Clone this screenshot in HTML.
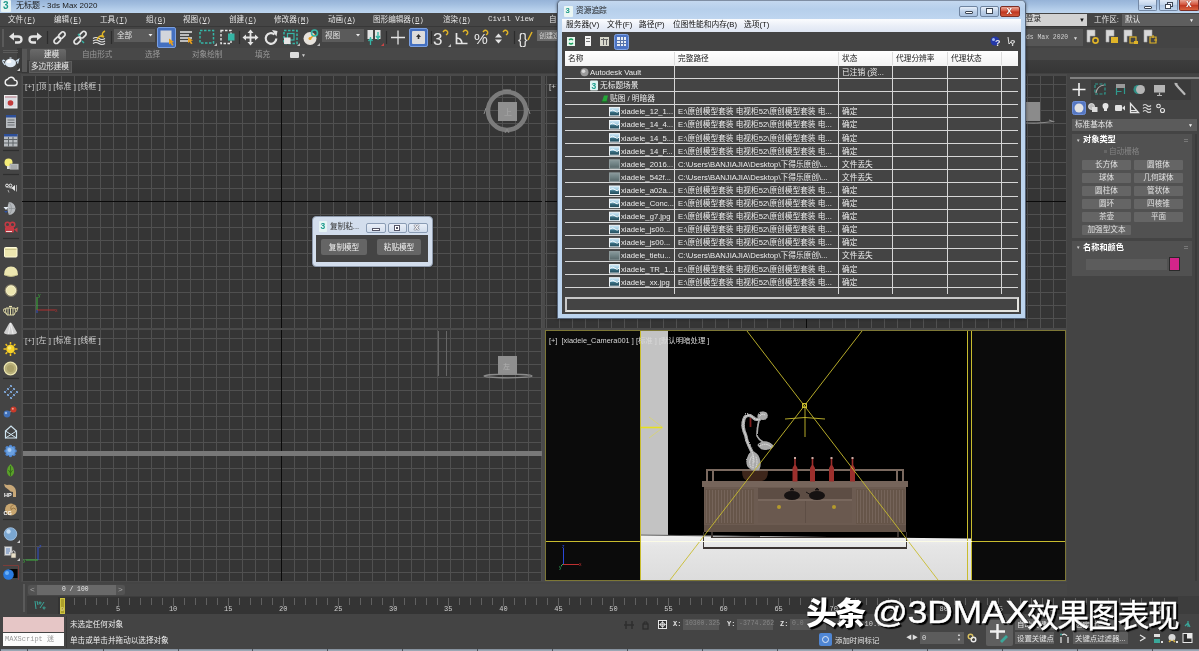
<!DOCTYPE html>
<html lang="zh-CN">
<head>
<meta charset="utf-8">
<title>无标题 - 3ds Max 2020</title>
<style>
*{box-sizing:border-box;margin:0;padding:0}
html,body{width:1199px;height:651px;overflow:hidden;background:#444}
body{position:relative;font-family:"Liberation Sans","Noto Sans CJK SC",sans-serif;font-size:9px;color:#ddd;line-height:1}
.a{position:absolute}
.t{position:absolute;white-space:nowrap}
.mono{font-family:"Liberation Mono","Noto Sans CJK SC",monospace}
svg{position:absolute;overflow:visible}
</style>
</head>
<body>
<div id="root" style="position:absolute;left:0;top:0;width:1199px;height:651px;will-change:transform;overflow:hidden">
<!-- main window title bar -->
<div class="a" style="left:0;top:0;width:1199px;height:13px;background:linear-gradient(#96b3d8,#a3bfe0 35%,#b6cfeb 75%,#bdd5ef)"></div>
<div class="a" style="left:1px;top:0;width:10px;height:12px;background:#e8f4f4;border-radius:1px"></div>
<div class="t" style="left:3px;top:1px;font-size:10px;font-weight:bold;color:#1f9a8c">3</div>
<div class="t" style="left:16px;top:2px;font-size:8px;color:#1a1a1a">无标题 - 3ds Max 2020</div>
<!-- window buttons -->
<div class="a" style="left:1138px;top:0;width:19px;height:10.500px;border:1px solid #7488a4;border-top:0;border-radius:0 0 2px 2px;background:linear-gradient(#dfe9f6,#c4d6ec 45%,#aec5e2 50%,#c0d5ee)"></div>
<div class="a" style="left:1144px;top:5.500px;width:8px;height:3px;border:1px solid #3c4654;background:#fff;border-radius:1px"></div>
<div class="a" style="left:1159px;top:0;width:18.500px;height:10.500px;border:1px solid #7488a4;border-top:0;border-radius:0 0 2px 2px;background:linear-gradient(#dfe9f6,#c4d6ec 45%,#aec5e2 50%,#c0d5ee)"></div>
<div class="a" style="left:1166.500px;top:2px;width:6px;height:5px;border:1px solid #3c4654;background:#eef"></div>
<div class="a" style="left:1164.500px;top:4px;width:6px;height:5px;border:1px solid #3c4654;background:#fff"></div>
<div class="a" style="left:1179px;top:0;width:20px;height:10.500px;border:1px solid #7c2f26;border-top:0;border-radius:0 0 2px 2px;background:linear-gradient(#e8a494,#d4573f 45%,#c03722 52%,#d8623e)"></div>
<div class="t" style="left:1186px;top:-1px;font-size:10px;font-weight:bold;color:#fff;text-shadow:0 0 1px #511">x</div>

<!-- menu bar -->
<div class="a" style="left:0;top:13px;width:1199px;height:14px;background:#454545"></div>
<div class="t" style="left:8px;top:15.700px;font-size:7.6px;color:#e4e4e4">文件<span class="mono" style="font-size:7px">(<u>F</u>)</span></div>
<div class="t" style="left:54px;top:15.700px;font-size:7.6px;color:#e4e4e4">编辑<span class="mono" style="font-size:7px">(<u>E</u>)</span></div>
<div class="t" style="left:100px;top:15.700px;font-size:7.6px;color:#e4e4e4">工具<span class="mono" style="font-size:7px">(<u>T</u>)</span></div>
<div class="t" style="left:146px;top:15.700px;font-size:7.6px;color:#e4e4e4">组<span class="mono" style="font-size:7px">(<u>G</u>)</span></div>
<div class="t" style="left:183px;top:15.700px;font-size:7.6px;color:#e4e4e4">视图<span class="mono" style="font-size:7px">(<u>V</u>)</span></div>
<div class="t" style="left:229px;top:15.700px;font-size:7.6px;color:#e4e4e4">创建<span class="mono" style="font-size:7px">(<u>C</u>)</span></div>
<div class="t" style="left:274px;top:15.700px;font-size:7.6px;color:#e4e4e4">修改器<span class="mono" style="font-size:7px">(<u>M</u>)</span></div>
<div class="t" style="left:328px;top:15.700px;font-size:7.6px;color:#e4e4e4">动画<span class="mono" style="font-size:7px">(<u>A</u>)</span></div>
<div class="t" style="left:373px;top:15.700px;font-size:7.6px;color:#e4e4e4">图形编辑器<span class="mono" style="font-size:7px">(<u>D</u>)</span></div>
<div class="t" style="left:443px;top:15.700px;font-size:7.6px;color:#e4e4e4">渲染<span class="mono" style="font-size:7px">(<u>R</u>)</span></div>
<div class="t mono" style="left:488px;top:15.700px;font-size:7.6px;color:#e4e4e4">Civil View</div>
<div class="t" style="left:549px;top:15.700px;font-size:7.6px;color:#e4e4e4">自</div>
<!-- sign-in / workspace -->
<div class="a" style="left:1025px;top:14px;width:62px;height:12px;background:#d2d2d2"></div>
<div class="t" style="left:1026px;top:15px;font-size:7.6px;color:#222">登录</div>
<div class="t" style="left:1079px;top:17px;font-size:6px;color:#111">▼</div>
<div class="t" style="left:1094px;top:15.700px;font-size:7.6px;color:#e4e4e4">工作区: </div>
<div class="a" style="left:1121.500px;top:14px;width:78px;height:12px;background:#5e5e5e"></div>
<div class="t" style="left:1125px;top:15.700px;font-size:7.6px;color:#e4e4e4">默认</div>
<div class="t" style="left:1189px;top:17.500px;font-size:5px;color:#eee">▼</div>

<div class="a" style="left:0;top:26px;width:1199px;height:1px;background:#383838"></div>
<!-- main toolbar -->
<div class="a" style="left:0;top:27px;width:1199px;height:21px;background:#444"></div>
<div class="a" style="left:2px;top:29px;width:2px;height:18px;background:#5a5a5a"></div>
<div class="a" style="left:1025px;top:29px;width:58px;height:17px;background:#565656"></div>
<div class="t mono" style="left:1026px;top:35px;font-size:6.400px;color:#d0d0d0">ds Max 2020</div>
<div class="t" style="left:1073px;top:36px;font-size:5px;color:#ddd">▼</div>
<!-- ribbon -->
<div class="a" style="left:0;top:48px;width:1199px;height:12px;background:#484848"></div><div class="a" style="left:0;top:60px;width:1199px;height:13px;background:linear-gradient(#3d3d3d,#363636)"></div><div class="a" style="left:0;top:73px;width:1199px;height:3px;background:#414141"></div>
<div class="a" style="left:17px;top:48px;width:5px;height:25px;background:#3a3a3a"></div><div class="a" style="left:22px;top:49px;width:5px;height:23px;background:#575757"></div>
<div class="a" style="left:30px;top:49px;width:36px;height:12px;background:linear-gradient(#6a6a6a,#555);border-radius:2px 2px 0 0"></div>
<div class="t" style="left:44px;top:51px;font-size:7.6px;color:#eee">建模</div>
<div class="t" style="left:82px;top:51px;font-size:7.6px;color:#9a9a9a">自由形式</div>
<div class="t" style="left:145px;top:51px;font-size:7.6px;color:#9a9a9a">选择</div>
<div class="t" style="left:192px;top:51px;font-size:7.6px;color:#9a9a9a">对象绘制</div>
<div class="t" style="left:255px;top:51px;font-size:7.6px;color:#9a9a9a">填充</div>
<div class="a" style="left:290px;top:52px;width:9px;height:6px;background:#ddd;border-radius:1px"></div>
<div class="t" style="left:301px;top:53px;font-size:5px;color:#ccc">▼</div>

<div class="a" style="left:29px;top:61px;width:43px;height:12px;background:#4e4e4e;border:1px solid #5c5c5c"></div>
<div class="t" style="left:31px;top:63px;font-size:7.6px;color:#eee">多边形建模</div>
<!-- left toolbar -->
<div class="a" style="left:0;top:48px;width:17px;height:28px;background:#444"></div><div class="a" style="left:0;top:73px;width:22px;height:541px;background:#444"></div>
<svg style="left:0;top:27px" width="1199" height="21" viewBox="0 27 1199 21"><path d="M12.500 36.500h5.500q3.500 0 3.500 3t-3.500 3h-3" stroke="#e4e4e4" stroke-width="2.300" fill="none"/><path d="M9 36.500l5-4v8z" fill="#e4e4e4"/><path d="M38.500 36.500h-5.500q-3.500 0-3.500 3t3.500 3h3" stroke="#e4e4e4" stroke-width="2.300" fill="none"/><path d="M42 36.500l-5-4v8z" fill="#e4e4e4"/><path d="M47.500 31v13" stroke="#2c2c2c" stroke-width="1.200"/><path d="M111.500 31v13" stroke="#2c2c2c" stroke-width="1.200"/><path d="M239.500 31v13" stroke="#2c2c2c" stroke-width="1.200"/><path d="M386.500 31v13" stroke="#2c2c2c" stroke-width="1.200"/><path d="M431.500 31v13" stroke="#2c2c2c" stroke-width="1.200"/><path d="M514.500 31v13" stroke="#2c2c2c" stroke-width="1.200"/><g fill="none" stroke="#e4e4e4" stroke-width="1.700"><rect x="-3.300" y="-2.300" width="7.500" height="4.600" rx="2.300" transform="translate(57 40.500) rotate(-45)"/><rect x="-3.300" y="-2.300" width="7.500" height="4.600" rx="2.300" transform="translate(61.500 35.500) rotate(-45)"/></g><g fill="none" stroke="#e4e4e4" stroke-width="1.700"><rect x="-3.300" y="-2.300" width="7.500" height="4.600" rx="2.300" transform="translate(77 41) rotate(-45)"/><rect x="-3.300" y="-2.300" width="7.500" height="4.600" rx="2.300" transform="translate(82.500 35) rotate(-45)"/></g><path d="M78 34l2 2M82 41l2 2" stroke="#35b5a6" stroke-width="1.400"/><path d="M93 38.500q3-2 6 0t6 0M93 41q3-2 6 0t6 0M93 43.500q3-2 6 0t6 0" stroke="#e4e4e4" stroke-width="1.200" fill="none"/><path d="M97 40q2-5 6-4-2-3 2-5M100 36l4 1" stroke="#e0b428" stroke-width="1.400" fill="none"/><rect x="114" y="29" width="41" height="13" fill="#5b5b5b"/><path d="M148.500 34h4l-2 2.500z" fill="#eee"/><rect x="157.500" y="27.500" width="18" height="20" rx="1.500" fill="#4470c0" stroke="#7a9fe0" stroke-width="1"/><rect x="160.500" y="30.500" width="11" height="12" fill="#d2d6dc"/><path d="M169 38.500l5 3.500-2 .5 1.500 2.500-1.500.8-1.500-2.600-1.500 1.300z" fill="#e8a020"/><path d="M180 32h12M180 35h9M180 38h12M180 41h8" stroke="#e4e4e4" stroke-width="1.500"/><path d="M188 37l5 3.500-2 .5 1.500 2.500-1.500.8-1.500-2.600-1.500 1.300z" fill="#e8a020"/><rect x="200" y="30.500" width="13.500" height="12.500" fill="none" stroke="#35b5a6" stroke-width="1.500" stroke-dasharray="2.500 1.500"/><path d="M217 43v3h-3z" fill="#bbb"/><rect x="221" y="30.500" width="10" height="13" fill="none" stroke="#e4e4e4" stroke-width="1.400" stroke-dasharray="2.500 1.500"/><rect x="228" y="33.500" width="6.500" height="7" fill="#35b5a6"/><path d="M250.500 31v13M244 37.500h13" stroke="#e4e4e4" stroke-width="1.800"/><path d="M250.500 29.500l3 3.500h-6zM250.500 45.500l3-3.500h-6zM242.500 37.500l3.500-3v6zM258.500 37.500l-3.500-3v6z" fill="#e4e4e4"/><path d="M274.500 34.500a5.300 5.300 0 1 0 1.800 4" stroke="#e4e4e4" stroke-width="2.200" fill="none"/><path d="M272 30l5.500 1-1 5.500z" fill="#e4e4e4"/><rect x="284" y="30.500" width="13" height="13" fill="none" stroke="#35b5a6" stroke-width="1.500" stroke-dasharray="2.500 1.500"/><rect x="287.500" y="33.500" width="6.500" height="6.500" fill="none" stroke="#35b5a6" stroke-width="1.200"/><rect x="284" y="37.500" width="6.500" height="6.500" fill="#e4e4e4"/><path d="M300 43v3h-3z" fill="#bbb"/><circle cx="310" cy="38.500" r="6.500" fill="#e6e2dc"/><path d="M310 38.500l5-4" stroke="#e8a020" stroke-width="1.600"/><circle cx="310" cy="38.500" r="1.500" fill="#e8a020"/><circle cx="314.500" cy="33" r="3" fill="none" stroke="#35b5a6" stroke-width="1.600"/><path d="M320 43v3h-3z" fill="#bbb"/><rect x="322" y="29" width="42" height="13" fill="#5b5b5b"/><path d="M356 34h4l-2 2.500z" fill="#eee"/><rect x="367.500" y="30" width="5.500" height="9" fill="#e4e4e4"/><rect x="375" y="30" width="5.500" height="9" fill="#e4e4e4"/><path d="M370.500 37v8M368.500 41l2-2.500 2 2.500M378 32v8M376 36l2 2.500 2-2.500" stroke="#35b5a6" stroke-width="1.300" fill="none"/><path d="M384 43v3h-3z" fill="#c44"/><path d="M398 30.500v14M391 37.500h14" stroke="#e4e4e4" stroke-width="1.300"/><rect x="409.500" y="28.500" width="18" height="18" rx="1.500" fill="#4470c0" stroke="#7a9fe0"/><rect x="412" y="31" width="13" height="13" rx="1" fill="#dcdcdc"/><path d="M418.500 34l2.500 3h-1.700v2h-1.600v-2h-1.700z" fill="#333"/><text x="433" y="44.500" font-size="17" fill="#e4e4e4" font-family="Liberation Sans, sans-serif">3</text><path d="M443 32q2-3 4-1t-1 4" stroke="#e0b428" stroke-width="1.400" fill="none"/><path d="M451 44v3h-3z" fill="#bbb"/><path d="M456.500 33v10.500h11M456.500 38q5 0 5.500 5.500" stroke="#e4e4e4" stroke-width="1.700" fill="none"/><path d="M463 32q2-3 4-1t-1 4" stroke="#e0b428" stroke-width="1.400" fill="none"/><text x="474" y="44" font-size="15.500" fill="#e4e4e4" font-family="Liberation Sans, sans-serif">%</text><path d="M483 32q2-3 4-1t-1 4" stroke="#e0b428" stroke-width="1.400" fill="none"/><path d="M498.500 33.500l3.500 4h-7zM498.500 43.500l3.500-4h-7z" fill="#e4e4e4"/><path d="M503 32q2-3 4-1t-1 4" stroke="#e0b428" stroke-width="1.400" fill="none"/><text x="518" y="43.500" font-size="14.500" fill="#e4e4e4" font-family="Liberation Sans, sans-serif">{}</text><path d="M528 40l4-8" stroke="#e0b428" stroke-width="1.500"/><rect x="537" y="30" width="21" height="11" fill="#6a6a6a"/><path d="M1087 30h8v6h-5v6h-3z" fill="#d8d8d8"/><path d="M1087 30h8v6h-5v6h-3z" fill="none" stroke="#aaa" stroke-width="0.600"/><path d="M1106 30h8v6h-5v6h-3z" fill="#d8d8d8"/><path d="M1106 30h8v6h-5v6h-3z" fill="none" stroke="#aaa" stroke-width="0.600"/><path d="M1124 30h8v6h-5v6h-3z" fill="#d8d8d8"/><path d="M1124 30h8v6h-5v6h-3z" fill="none" stroke="#aaa" stroke-width="0.600"/><path d="M1144 30h8v6h-5v6h-3z" fill="#d8d8d8"/><path d="M1144 30h8v6h-5v6h-3z" fill="none" stroke="#aaa" stroke-width="0.600"/><circle cx="1095.500" cy="40.500" r="2.600" fill="none" stroke="#e0b428" stroke-width="1.600"/><rect x="1111" y="37" width="7" height="6" fill="#e0b428"/><rect x="1130" y="37" width="6" height="6" fill="none" stroke="#e0b428" stroke-width="1.200"/><path d="M1134 41h4v3h-4z" fill="#e0b428"/><path d="M1150 37h6v6h-6zM1153 35v3M1157 40h-3" stroke="#e0b428" stroke-width="1.200" fill="none"/></svg>
<div class="t" style="left:117px;top:32px;font-size:7.600px;color:#e0e0e0">全部</div><div class="t" style="left:325px;top:32px;font-size:7.600px;color:#e0e0e0">视图</div><div class="t" style="left:539px;top:32px;font-size:7px;color:#d0d0d0;width:18px;overflow:hidden">创建选择集</div>
<svg style="left:0;top:48px" width="22" height="568" viewBox="0 48 22 568"><path d="M3 50.500h15M3 52.500h15" stroke="#5a5a5a" stroke-width="1"/><path d="M3 150.500h16" stroke="#2e2e2e" stroke-width="1.200"/><path d="M3 174.500h16" stroke="#2e2e2e" stroke-width="1.200"/><path d="M3 238.500h16" stroke="#2e2e2e" stroke-width="1.200"/><path d="M3 378.500h16" stroke="#2e2e2e" stroke-width="1.200"/><path d="M3 519.500h16" stroke="#2e2e2e" stroke-width="1.200"/><path d="M3 583.500h16" stroke="#2e2e2e" stroke-width="1.200"/><ellipse cx="10.500" cy="63" rx="5.500" ry="4.300" fill="#dfeaf4"/><path d="M5 61q-3-2-2 1l2 3M15.500 61.500l3-2-1 4" stroke="#cfe0ee" stroke-width="1.300" fill="none"/><ellipse cx="9" cy="61.500" rx="2.500" ry="1.600" fill="#fff"/><path d="M9.500 58h2" stroke="#dfeaf4" stroke-width="1.200"/><path d="M20 68v3h-3z" fill="#ccc"/><path d="M7.500 85.500h7a2.700 2.700 0 0 0 0-5.400 3.600 3.600 0 0 0-6.800-.8 3.200 3.200 0 0 0-.2 6.200z" fill="none" stroke="#f0f0f0" stroke-width="1.400"/><rect x="4.500" y="95.500" width="12.500" height="12.500" fill="#d9dce2" stroke="#f0f0f0" stroke-width="1"/><rect x="5" y="96" width="11.500" height="2" fill="#c8a8b0"/><circle cx="10.500" cy="103" r="2.800" fill="#c23a3a"/><rect x="6" y="115" width="10" height="13" fill="#b8bcc0"/><rect x="6" y="115" width="10" height="2.500" fill="#2c4f9a"/><path d="M7.500 120h7M7.500 122.500h7M7.500 125h7" stroke="#6a6e72" stroke-width="1"/><rect x="4" y="134" width="13.500" height="12.500" fill="#b8bcc0"/><rect x="4" y="134" width="13.500" height="2.500" fill="#2c4f9a"/><path d="M4 139.500h13.500M4 143h13.500M8.500 137v9.500M13 137v9.500" stroke="#5e6468" stroke-width="1"/><circle cx="8.500" cy="162.500" r="4" fill="#f4ec78"/><rect x="7" y="166" width="3" height="3" fill="#ddd"/><rect x="10" y="164" width="8.500" height="5.500" fill="#c8ccd0" stroke="#888" stroke-width="0.600"/><path d="M11 166h6.500M11 168h6.500" stroke="#666" stroke-width="0.700"/><path d="M5 187.500h7l3-2.500v6l-3-2.500" fill="#e8e8e8"/><circle cx="7" cy="185.500" r="1.400" fill="none" stroke="#eee" stroke-width="1"/><circle cx="10.500" cy="185.500" r="1.400" fill="none" stroke="#eee" stroke-width="1"/><path d="M8 190l1 2.500M16.500 185v6.500" stroke="#aaa" stroke-width="1"/><path d="M9 202a6.500 6.500 0 0 1 0 13q-3-6.500 0-13z" fill="#b4b8bc"/><path d="M9 202q5 6.500 0 13M9 208.500h6.500" stroke="#8c9094" stroke-width="0.700" fill="none"/><path d="M3.500 207h5l-2.500 3z" fill="#e8f0f8"/><path d="M4 211l2 2 2-2" fill="#2c50a0"/><rect x="5" y="227" width="9" height="5.500" rx="1" fill="#c43a44"/><circle cx="7.500" cy="224.500" r="2.300" fill="none" stroke="#c43a44" stroke-width="1.500"/><circle cx="12.500" cy="224.500" r="2.300" fill="none" stroke="#c43a44" stroke-width="1.500"/><path d="M14 229.500l3.500-2v5z" fill="#c43a44"/><path d="M6 231.500h6" stroke="#f0d8d8" stroke-width="1"/><rect x="4.500" y="247.500" width="12.500" height="9.500" rx="1" fill="#ece6b0" stroke="#fffbd8" stroke-width="1"/><path d="M5 249.500h11.500" stroke="#c8c088" stroke-width="0.800"/><path d="M4 275q0-8.500 7-8.500t7 8.500q-7 3.500-14 0z" fill="#ece6b0"/><path d="M4.500 275q6.500 3 13 0" stroke="#bab47e" stroke-width="0.700" fill="none"/><circle cx="11" cy="290.500" r="6.300" fill="#8a8468"/><circle cx="11" cy="290.500" r="4.800" fill="#ece6b0" stroke="#fffbd8" stroke-width="0.800"/><path d="M6 308h9q1.500 4-1 7h-7q-2.500-3-1-7zM6 309q-3-1-2.500 1.500t3 3M15 309l3-1.500-1.500 4.500M8 308v7M10.500 308v7M13 308v7" stroke="#ece6b0" stroke-width="0.900" fill="none"/><path d="M9 306.500h3" stroke="#ece6b0" stroke-width="1.200"/><path d="M10.500 322.500q1 0 2 2l4.500 8q0 2-6.500 2t-6.500-2l4.500-8q1-2 2-2z" fill="#cfcfcf"/><path d="M10.500 323l-2 11M10.500 323l2.500 11" stroke="#f4f4f4" stroke-width="0.800"/><path d="M15.0 349.0L17.5 349.0M13.7 352.2L15.4 353.9M10.5 353.5L10.5 356.0M7.3 352.2L5.6 353.9M6.0 349.0L3.5 349.0M7.3 345.8L5.6 344.1M10.5 344.5L10.5 342.0M13.7 345.8L15.4 344.1" stroke="#f0c020" stroke-width="1.500"/><circle cx="10.500" cy="349" r="4.300" fill="#f8d428"/><circle cx="9.500" cy="348" r="1.800" fill="#fce870"/><circle cx="10.500" cy="368.500" r="6.300" fill="#b8b07a" stroke="#ece6b0" stroke-width="1.200"/><circle cx="10.500" cy="368.500" r="3.500" fill="#a89f68"/><circle cx="5" cy="392" r="1.100" fill="#9cc4ee"/><circle cx="8" cy="389" r="1.100" fill="#9cc4ee"/><circle cx="11" cy="386" r="1.100" fill="#9cc4ee"/><circle cx="8" cy="395" r="1.100" fill="#9cc4ee"/><circle cx="11" cy="392" r="1.100" fill="#9cc4ee"/><circle cx="14" cy="389" r="1.100" fill="#9cc4ee"/><circle cx="11" cy="398" r="1.100" fill="#9cc4ee"/><circle cx="14" cy="395" r="1.100" fill="#9cc4ee"/><circle cx="17" cy="392" r="1.100" fill="#9cc4ee"/><path d="M4 393l8-8M7 396l8-8M10 399l8-8" stroke="#5a84c0" stroke-width="0.700"/><path d="M7 414l6.500-4.500" stroke="#888" stroke-width="1.200"/><circle cx="7" cy="414" r="3.400" fill="#3f6fb8"/><circle cx="6" cy="413" r="1.200" fill="#9cbce8"/><circle cx="13.500" cy="409.500" r="3" fill="#c83a2a"/><circle cx="12.800" cy="408.700" r="1" fill="#f0a090"/><path d="M5.500 431l5.500-5 5.500 5v7h-11z" fill="none" stroke="#cfe4f0" stroke-width="1.200"/><path d="M5.500 431l11 7M16.500 431l-11 7" stroke="#cfe4f0" stroke-width="1"/><circle cx="15.1" cy="451.0" r="1.700" fill="#4e86d0"/><circle cx="13.8" cy="454.3" r="1.700" fill="#4e86d0"/><circle cx="10.5" cy="455.6" r="1.700" fill="#4e86d0"/><circle cx="7.2" cy="454.3" r="1.700" fill="#4e86d0"/><circle cx="5.9" cy="451.0" r="1.700" fill="#4e86d0"/><circle cx="7.2" cy="447.7" r="1.700" fill="#4e86d0"/><circle cx="10.5" cy="446.4" r="1.700" fill="#4e86d0"/><circle cx="13.8" cy="447.7" r="1.700" fill="#4e86d0"/><circle cx="10.500" cy="451" r="4.500" fill="#6aa0e0"/><circle cx="9.500" cy="450" r="2" fill="#a8ccf4"/><path d="M10.500 464q5 5 3 10-1.500 2.500-3 2.500t-3-2.500q-2-5 3-10z" fill="#5aa02a"/><path d="M10.500 466v10M8.500 470l2 3M12.500 470l-2 3" stroke="#2e6414" stroke-width="0.800"/><path d="M4 484l3 1q3-1 6 1 3 2 3 6v5h-3v-5q-3 0-4-2l-4-3z" fill="#c8a878"/><text x="4" y="497" font-size="5.500" font-weight="bold" fill="#fff" font-family="Liberation Sans, sans-serif">HP</text><circle cx="11" cy="509.500" r="6" fill="#c8a670"/><path d="M11 509.500q3-3 5 0M11 509.500q-1-4 3-5" stroke="#8a6a3a" stroke-width="0.800" fill="none"/><text x="3.500" y="515" font-size="5.500" font-weight="bold" fill="#fff" font-family="Liberation Sans, sans-serif">CG</text><circle cx="10.500" cy="534" r="6.300" fill="#7aa6d0"/><circle cx="10.500" cy="534" r="6.300" fill="none" stroke="#a8c8e8" stroke-width="0.800"/><circle cx="8.500" cy="531.500" r="2.200" fill="#c4dcf2"/><path d="M20 540v3h-3z" fill="#ccc"/><rect x="4.500" y="546.500" width="7.500" height="9" fill="#d8dce0" stroke="#888" stroke-width="0.600"/><path d="M6 549h4M6 551h4M6 553h3" stroke="#3c68b0" stroke-width="0.800"/><rect x="11" y="553" width="5" height="5" fill="#e8e0c8" stroke="#555" stroke-width="0.600"/><path d="M12 553v-1.500q1.500-1.500 3 0v1.500" stroke="#ddd" stroke-width="0.900" fill="none"/><path d="M20 558v3h-3z" fill="#ccc"/><path d="M3 565.500h15.500V580" stroke="#8a3a36" stroke-width="0.800" fill="none"/><rect x="9" y="569" width="8.500" height="9" fill="#050505"/><circle cx="8.500" cy="574.500" r="5.300" fill="#2a7ae0"/><circle cx="7" cy="573" r="2" fill="#6ab0f8"/><rect x="5" y="591" width="8" height="12" rx="1" fill="#b0b8c0" stroke="#e0e4e8" stroke-width="0.800"/><rect x="14" y="597" width="4" height="5" fill="#d0d4d8"/><rect x="15" y="598.500" width="2" height="2" fill="#555"/><path d="M5 612q5.500-5 11 0" stroke="#d8d8d8" stroke-width="1.200" fill="none"/></svg>
<div class="a" style="left:21px;top:74px;width:1046px;height:508px;background:#4a4a4a"></div>
<svg style="left:22px;top:76px" width="520" height="252" viewBox="22 76 520 252" shape-rendering="crispEdges"><rect x="22" y="76" width="520" height="252" fill="#353535"/><path d="M294.5 76V328M307.5 76V328M320.5 76V328M333.5 76V328M346.5 76V328M359.5 76V328M372.5 76V328M385.5 76V328M398.5 76V328M411.5 76V328M424.5 76V328M437.5 76V328M450.5 76V328M463.5 76V328M476.5 76V328M489.5 76V328M502.5 76V328M515.5 76V328M528.5 76V328M541.5 76V328M268.5 76V328M255.5 76V328M242.5 76V328M229.5 76V328M216.5 76V328M203.5 76V328M190.5 76V328M177.5 76V328M164.5 76V328M151.5 76V328M138.5 76V328M126.5 76V328M113.5 76V328M100.5 76V328M87.5 76V328M74.5 76V328M61.5 76V328M48.5 76V328M35.5 76V328M22.5 76V328M22 84.5H542M22 97.5H542M22 110.5H542M22 123.5H542M22 136.5H542M22 149.5H542M22 162.5H542M22 175.5H542M22 188.5H542M22 214.5H542M22 227.5H542M22 240.5H542M22 253.5H542M22 266.5H542M22 279.5H542M22 292.5H542M22 305.5H542M22 318.5H542" stroke="#505050" stroke-width="1" fill="none"/><path d="M281.5 76V328M22 201.5H542" stroke="#0a0a0a" stroke-width="1" fill="none"/></svg>
<svg style="left:22px;top:330px" width="520" height="251" viewBox="22 330 520 251" shape-rendering="crispEdges"><rect x="22" y="330" width="520" height="251" fill="#353535"/><path d="M294.5 330V581M307.5 330V581M320.5 330V581M333.5 330V581M346.5 330V581M359.5 330V581M372.5 330V581M385.5 330V581M398.5 330V581M411.5 330V581M424.5 330V581M437.5 330V581M450.5 330V581M463.5 330V581M476.5 330V581M489.5 330V581M502.5 330V581M515.5 330V581M528.5 330V581M541.5 330V581M268.5 330V581M255.5 330V581M242.5 330V581M229.5 330V581M216.5 330V581M203.5 330V581M190.5 330V581M177.5 330V581M164.5 330V581M151.5 330V581M138.5 330V581M126.5 330V581M113.5 330V581M100.5 330V581M87.5 330V581M74.5 330V581M61.5 330V581M48.5 330V581M35.5 330V581M22.5 330V581M22 338.5H542M22 351.5H542M22 364.5H542M22 377.5H542M22 390.5H542M22 403.5H542M22 416.5H542M22 429.5H542M22 442.5H542M22 468.5H542M22 481.5H542M22 494.5H542M22 507.5H542M22 520.5H542M22 533.5H542M22 546.5H542M22 559.5H542M22 572.5H542" stroke="#505050" stroke-width="1" fill="none"/><path d="M281.5 330V581" stroke="#0a0a0a" stroke-width="1" fill="none"/></svg>
<div class="a" style="left:23px;top:451px;width:519px;height:5px;background:#787878"></div>
<svg style="left:545px;top:76px" width="521" height="252" viewBox="545 76 521 252" shape-rendering="crispEdges"><rect x="545" y="76" width="521" height="252" fill="#353535"/><path d="M819.5 76V328M832.5 76V328M845.5 76V328M858.5 76V328M871.5 76V328M884.5 76V328M897.5 76V328M910.5 76V328M923.5 76V328M936.5 76V328M949.5 76V328M962.5 76V328M975.5 76V328M988.5 76V328M1001.5 76V328M1014.5 76V328M1027.5 76V328M1040.5 76V328M1053.5 76V328M793.5 76V328M780.5 76V328M767.5 76V328M754.5 76V328M741.5 76V328M728.5 76V328M715.5 76V328M702.5 76V328M689.5 76V328M676.5 76V328M663.5 76V328M650.5 76V328M637.5 76V328M624.5 76V328M611.5 76V328M598.5 76V328M585.5 76V328M572.5 76V328M559.5 76V328M546.5 76V328M545 84.5H1066M545 97.5H1066M545 110.5H1066M545 123.5H1066M545 136.5H1066M545 149.5H1066M545 162.5H1066M545 175.5H1066M545 188.5H1066M545 214.5H1066M545 227.5H1066M545 240.5H1066M545 253.5H1066M545 266.5H1066M545 279.5H1066M545 292.5H1066M545 305.5H1066M545 318.5H1066" stroke="#505050" stroke-width="1" fill="none"/><path d="M806.5 76V328M545 201.5H1066" stroke="#0a0a0a" stroke-width="1" fill="none"/></svg>
<div class="a" style="left:1020px;top:102px;width:20px;height:19px;background:#8b8b8b"></div><svg style="left:1020px;top:118px" width="40" height="8" viewBox="1020 118 40 8"><path d="M1022 122.500q16 1.500 31-1l-4-1.500" stroke="#8a8a8a" stroke-width="1.200" fill="none"/></svg>
<div class="t" style="left:25px;top:83px;font-size:8px;color:#cfcfcf;letter-spacing:0">[+] [顶 ] [标准 ] [线框 ]</div>
<div class="t" style="left:25px;top:337px;font-size:8px;color:#cfcfcf;letter-spacing:0">[+] [左 ] [标准 ] [线框 ]</div>
<div class="t" style="left:549px;top:83px;font-size:8px;color:#cfcfcf;letter-spacing:0">[+</div>
<svg style="left:480px;top:85px" width="54" height="54" viewBox="480 85 54 54">
<circle cx="507" cy="111" r="19" fill="none" stroke="#7b7b7b" stroke-width="4.5"/>
<rect x="498" y="102" width="19" height="19" fill="#8f8f8f"/>
<text x="504" y="115" font-size="8" fill="#a8a8a8" font-family="Liberation Sans, sans-serif">上</text>
<path d="M503 90h8M505 133l2-4 2 4M486 108l-2 6M528 108l2 6" stroke="#8a8a8a" stroke-width="1" fill="none"/>
</svg>
<svg style="left:30px;top:290px" width="30" height="25" viewBox="30 290 30 25">
<path d="M37 310V297" stroke="#3cb43c" stroke-width="1"/><path d="M37 310H55" stroke="#b03030" stroke-width="1"/>
<path d="M37 310v3" stroke="#3050c0" stroke-width="1"/>
<text x="38" y="297" font-size="5" fill="#3cb43c" font-family="Liberation Sans, sans-serif">y</text>
<text x="55" y="312" font-size="5" fill="#b03030" font-family="Liberation Sans, sans-serif">x</text>
</svg>
<svg style="left:30px;top:540px" width="30" height="25" viewBox="30 540 30 25">
<path d="M38 560V547" stroke="#3050d0" stroke-width="1"/><path d="M38 560H26" stroke="#3cb43c" stroke-width="1"/>
<text x="39" y="548" font-size="5" fill="#3050d0" font-family="Liberation Sans, sans-serif">z</text>
<text x="23" y="562" font-size="5" fill="#3cb43c" font-family="Liberation Sans, sans-serif">y</text>
</svg>
<svg style="left:430px;top:330px" width="112" height="60" viewBox="430 330 112 60">
<path d="M438.5 331V376M446.5 331V376" stroke="#666" stroke-width="1"/>
<rect x="498" y="356" width="19" height="19" fill="#8f8f8f"/>
<text x="503" y="369" font-size="7" fill="#b0b0b0" font-family="Liberation Sans, sans-serif">左</text>
<ellipse cx="508" cy="376" rx="24" ry="1.8" fill="none" stroke="#8c8c8c" stroke-width="1.3"/>
</svg>
<div class="a" style="left:312px;top:216px;width:121px;height:51px;background:#d3deed;border:1px solid #8e9aac;border-radius:4px;box-shadow:0 0 2px rgba(0,0,0,.4)"></div>
<div class="a" style="left:319px;top:221px;width:8px;height:11px;background:#e6f4f4;border-radius:1px"></div>
<div class="t" style="left:320.500px;top:222px;font-size:8.500px;font-weight:bold;color:#1a9a8c">3</div>
<div class="t" style="left:330px;top:223px;font-size:7.600px;color:#333">复制粘...</div>
<div class="a" style="left:366px;top:222.500px;width:20px;height:10px;border:1px solid #8a9cb4;border-radius:2px;background:linear-gradient(#e8eef7,#d2ddec)"></div>
<div class="a" style="left:372px;top:227.500px;width:8px;height:3px;border:1px solid #556;background:#fff"></div>
<div class="a" style="left:387.500px;top:222.500px;width:19px;height:10px;border:1px solid #8a9cb4;border-radius:2px;background:linear-gradient(#e8eef7,#d2ddec)"></div>
<div class="a" style="left:394px;top:224.500px;width:6px;height:6px;border:1px solid #556;background:#fff"></div><div class="a" style="left:396px;top:226.500px;width:2px;height:2px;background:#556"></div>
<div class="a" style="left:408px;top:222.500px;width:20px;height:10px;border:1px solid #8a9cb4;border-radius:2px;background:linear-gradient(#e8eef7,#d2ddec)"></div>
<div class="t" style="left:414px;top:221.500px;font-size:9.500px;font-weight:bold;color:#fff;text-shadow:0 0 1px #334,0 0 1px #334,0 0 1px #334">x</div>
<div class="a" style="left:316px;top:235px;width:112px;height:27px;background:#444"></div>
<div class="a" style="left:321px;top:239px;width:46px;height:16px;background:#656565;border-radius:2px"></div>
<div class="t" style="left:321px;top:244px;width:46px;text-align:center;font-size:7.600px;color:#f0f0f0">复制模型</div>
<div class="a" style="left:377px;top:239px;width:44px;height:16px;background:#656565;border-radius:2px"></div>
<div class="t" style="left:377px;top:244px;width:44px;text-align:center;font-size:7.600px;color:#f0f0f0">粘贴模型</div>
<svg style="left:545px;top:330px" width="522" height="252" viewBox="545 330 522 252">
<rect x="545" y="330" width="521" height="251" fill="#0b0b0b"/>
<rect x="641" y="331" width="327" height="250" fill="#000"/>
<rect x="641" y="331" width="27" height="204" fill="#c3c3c3"/>
<defs><linearGradient id="fl" x1="0" y1="0" x2="0" y2="1"><stop offset="0" stop-color="#f2f2f2"/><stop offset="0.25" stop-color="#e6e6e6"/><stop offset="1" stop-color="#dcdcdc"/></linearGradient></defs>
<path d="M641 534.500L700 535.500L968 538.500L972 538.500V581H641Z" fill="url(#fl)"/>
<path d="M641 535L760 536.500" stroke="#555" stroke-width="1" fill="none"/>
<g shape-rendering="crispEdges"><path d="M703.500 532V548H906.500V532M712 532v6M898 532v6M712 537.500H898" stroke="#3c3532" stroke-width="1.6" fill="none"/><rect x="704" y="486" width="202" height="46" fill="#6c5b51"/><rect x="702" y="481" width="206" height="6" fill="#76655b"/><rect x="706" y="469" width="198" height="2" fill="#7a695f"/><rect x="706" y="470" width="2" height="12" fill="#7a695f"/><rect x="712" y="470" width="2" height="12" fill="#7a695f"/><rect x="896" y="470" width="2" height="12" fill="#7a695f"/><rect x="902" y="470" width="2" height="12" fill="#7a695f"/><rect x="705" y="489" width="49" height="35" fill="#665549"/><rect x="856" y="489" width="49" height="35" fill="#665549"/><path d="M706.5 490V523M857.5 490V523M709.5 490V523M860.5 490V523M712.5 490V523M863.5 490V523M715.5 490V523M866.5 490V523M718.5 490V523M869.5 490V523M721.5 490V523M872.5 490V523M724.5 490V523M875.5 490V523M727.5 490V523M878.5 490V523M730.5 490V523M881.5 490V523M733.5 490V523M884.5 490V523M736.5 490V523M887.5 490V523M739.5 490V523M890.5 490V523M742.5 490V523M893.5 490V523M745.5 490V523M896.5 490V523M748.5 490V523M899.5 490V523M751.5 490V523M902.5 490V523" stroke="#75645a" stroke-width="1" fill="none"/><rect x="704" y="525" width="202" height="7" fill="#625248"/><rect x="758" y="488" width="94" height="12" fill="#5d4d44"/><rect x="758" y="499" width="94" height="2" fill="#78675d"/><rect x="758" y="501" width="94" height="22" fill="#6a594f"/><path d="M805.500 501V523" stroke="#5e4e45" stroke-width="1"/></g>
<ellipse cx="792" cy="495.500" rx="8" ry="4.500" fill="#161212"/><ellipse cx="817" cy="495.500" rx="8" ry="4.500" fill="#161212"/><path d="M790 490l2-2 2 2zM815 490l2-2 2 2zM806 492l5 3" stroke="#161212" fill="#161212"/>
<circle cx="779" cy="507" r="2" fill="#b49a2c"/><circle cx="834" cy="507" r="2" fill="#b49a2c"/>
<path d="M794.2 458h1.600v7l1.700 3v13.500h-5v-13.500l1.700-3z" fill="#9c2f2c"/><rect x="794" y="457" width="2" height="2" fill="#c9a8a0"/><path d="M811.7 458h1.600v7l1.700 3v13.500h-5v-13.500l1.700-3z" fill="#9c2f2c"/><rect x="811.5" y="457" width="2" height="2" fill="#c9a8a0"/><path d="M830.7 458h1.600v7l1.700 3v13.500h-5v-13.500l1.700-3z" fill="#9c2f2c"/><rect x="830.5" y="457" width="2" height="2" fill="#c9a8a0"/><path d="M851.7 458h1.600v7l1.700 3v13.500h-5v-13.500l1.700-3z" fill="#9c2f2c"/><rect x="851.5" y="457" width="2" height="2" fill="#c9a8a0"/>
<path d="M742 471h26q0 9-6 10h-14q-6-1-6-10z" fill="#3e261b"/>
<filter id="rk" x="-20%" y="-20%" width="140%" height="140%"><feTurbulence type="fractalNoise" baseFrequency="0.9" numOctaves="2" seed="4" result="n"/><feDisplacementMap in="SourceGraphic" in2="n" scale="2.200" result="d"/><feColorMatrix in="n" type="matrix" values="0 0 0 0 1  0 0 0 0 1  0 0 0 0 1  1.600 0 0 0 -0.350" result="m"/><feComposite in="d" in2="m" operator="in" result="sp"/><feMerge><feMergeNode in="d"/><feMergeNode in="sp"/></feMerge></filter><g filter="url(#rk)"><g fill="none" stroke="#a9a9a9" stroke-linecap="round" stroke-linejoin="round"><path d="M754 462q0-6-2-10-3-6-5-11-1-6-3-10-2-6 0-12 2-5 7-3l4 3q3 1 5 0" stroke-width="3.200"/><path d="M759 417q0-4 4-4 4 0 3 4-2 3-7 0z" stroke-width="3" fill="#a9a9a9"/><path d="M759 420q-2 8-2 16 2 4 6 6" stroke-width="1.600"/><path d="M759 445q6-5 13 1-4 4-10 2z" stroke-width="2.800" fill="#a9a9a9"/><path d="M753 469q-7-3-5-10 2-7 6-6 4 2 5 8 1 6-1 8z" stroke-width="2.500" fill="#a9a9a9"/></g></g><g fill="none" stroke="#ededed" stroke-width="0.800" stroke-dasharray="0.900 1.400" stroke-linecap="round"><path d="M754 462q0-6-2-10-3-6-5-11-1-6-3-10-2-6 0-12 2-5 7-3l4 3q3 1 5 0M751 467q-3-5 1-11M756 467q2-5 0-10M753 468v-12M760 446q6-4 11 1M760 416q2-3 5-1"/></g><path d="M750.500 418v9" stroke="#7e1c1c" stroke-width="1.800"/>
<g stroke="#c8bc2e" stroke-width="1" fill="none"><path d="M747 331L938 580M862 331L670 580" stroke-width="0.9"/><path d="M785 419q20-3 40 0M805 406V437" stroke-width="0.9"/><rect x="802.500" y="403.500" width="4" height="4" stroke-width="1"/></g>
<g stroke="#c8bc2e" stroke-width="1" fill="none" shape-rendering="crispEdges"><path d="M640.500 331V580M967.500 331V580M971.500 331V580M546 541.500H1065M546 330.500H972M546 580.500H972"/></g>
<path d="M641 541.500H972" stroke="#fbfbe6" stroke-width="1" shape-rendering="crispEdges"/><rect x="545.500" y="330.500" width="520" height="250" fill="none" stroke="#7d7736" stroke-width="1" shape-rendering="crispEdges"/>
<path d="M641 427.500H662" stroke="#e6e020" stroke-width="1.600"/><path d="M649 417l14 10.500-14 10.500" stroke="#d8d46a" stroke-width="0.8" fill="none"/>
<path d="M563.500 564V548" stroke="#2a48d8" stroke-width="1"/><path d="M563 564.500H579" stroke="#c03030" stroke-width="1"/><path d="M563 564l-2 2" stroke="#30b060" stroke-width="1"/><text x="562" y="548" font-size="5" fill="#2a48d8" font-family="Liberation Sans, sans-serif">z</text><text x="579" y="566" font-size="5" fill="#c03030" font-family="Liberation Sans, sans-serif">x</text><text x="559" y="569" font-size="5" fill="#30b060" font-family="Liberation Sans, sans-serif">y</text>
</svg>
<div class="t" style="left:549px;top:337px;font-size:7.400px;color:#d8d8d8">[+]&nbsp; [xiadele_Camera001 ] [标准 ] [默认明暗处理 ]</div>
<div class="a" style="left:557px;top:0;width:469px;height:319px;background:#bcd4ee;border:1px solid #56657a;border-top-color:#7f8ea3;border-radius:5px 5px 1px 1px;box-shadow:0 0 3px rgba(0,0,0,.5)"></div>
<div class="a" style="left:558px;top:1px;width:467px;height:18px;background:linear-gradient(#c4d8ef,#b6cfeb 45%,#bfd6f0);border-radius:4px 4px 0 0"></div>
<div class="a" style="left:564px;top:6px;width:9px;height:11px;background:#eaf6f4;border-radius:1px"></div><div class="t" style="left:565.500px;top:7px;font-size:7.7px;font-weight:bold;color:#1a9a86">3</div><div class="t" style="left:576px;top:7.200px;font-size:7.7px;color:#1c1c1c">资源追踪</div>
<div class="a" style="left:959px;top:6px;width:19px;height:11px;border:1px solid #6f84a0;border-radius:2px;background:linear-gradient(#e6eef9,#bdd0e8 50%,#a9c0de)"></div><div class="a" style="left:965px;top:11px;width:8px;height:3px;border:1px solid #3c4654;background:#fff;border-radius:1px"></div><div class="a" style="left:980px;top:6px;width:19px;height:11px;border:1px solid #6f84a0;border-radius:2px;background:linear-gradient(#e6eef9,#bdd0e8 50%,#a9c0de)"></div><div class="a" style="left:986px;top:8px;width:7px;height:6px;border:1.500px solid #3c4654;background:#fff"></div><div class="a" style="left:1000px;top:6px;width:20px;height:11px;border:1px solid #7c2f26;border-radius:2px;background:linear-gradient(#eaa898,#d2553f 45%,#bf3420 55%,#cf5a3c)"></div><div class="t" style="left:1006.500px;top:5.500px;font-size:10px;font-weight:bold;color:#fff;text-shadow:0 0 1px #400">x</div>
<div class="a" style="left:562px;top:19px;width:459px;height:13px;background:linear-gradient(#fbfcfe,#e9eef7 55%,#dfe6f3)"></div>
<div class="t" style="left:566px;top:21px;font-size:7.7px;color:#101010">服务器(V)</div><div class="t" style="left:607px;top:21px;font-size:7.7px;color:#101010">文件(F)</div><div class="t" style="left:639px;top:21px;font-size:7.7px;color:#101010">路径(P)</div><div class="t" style="left:673px;top:21px;font-size:7.7px;color:#101010">位图性能和内存(B)</div><div class="t" style="left:744px;top:21px;font-size:7.7px;color:#101010">选项(T)</div>
<div class="a" style="left:562px;top:32px;width:459px;height:282px;background:#444"></div>
<svg style="left:562px;top:32px" width="459" height="19" viewBox="562 32 459 19"><rect x="567" y="37" width="8" height="9" fill="#e8f6ee"/><path d="M569 40q2-2 4 0M573 43q-2 2-4 0" stroke="#14a05a" stroke-width="1.400" fill="none"/><rect x="585" y="36" width="6" height="10" fill="#f4f4f4"/><path d="M586 38.500h4M586 41.500h4" stroke="#777" stroke-width="1"/><rect x="600" y="37" width="9" height="9" fill="#d8d8cc"/><path d="M601 39.500h7M603.500 38v7M606.500 40v5" stroke="#666" stroke-width="1"/><rect x="614.500" y="34.500" width="14" height="15" rx="2" fill="#4c74c4" stroke="#7fa3e6"/><rect x="617" y="37" width="9" height="9" fill="#e6ecf6"/><path d="M617 40.500h9M617 43.500h9M620.500 37v9M623.500 37v9" stroke="#5874a8" stroke-width="1"/><circle cx="995" cy="41" r="4.500" fill="#2438a8"/><circle cx="993.500" cy="39.500" r="1.500" fill="#9fb4ee"/><text x="995" y="46" font-size="9" font-weight="bold" fill="#e8e8e8" font-family="Liberation Sans, sans-serif">?</text><path d="M1008 37l1 7 2-2 2 3" stroke="#ddd" stroke-width="1" fill="none"/><text x="1010" y="46" font-size="9" font-weight="bold" fill="#d4d4d4" font-family="Liberation Sans, sans-serif">?</text></svg>
<div class="a" style="left:565px;top:51px;width:453px;height:15px;background:linear-gradient(#fff,#f2f2f2)"></div>
<div class="t" style="left:568px;top:55px;font-size:7.7px;color:#1a1a1a">名称</div><div class="t" style="left:678px;top:55px;font-size:7.7px;color:#1a1a1a">完整路径</div><div class="t" style="left:842px;top:55px;font-size:7.7px;color:#1a1a1a">状态</div><div class="t" style="left:896px;top:55px;font-size:7.7px;color:#1a1a1a">代理分辨率</div><div class="t" style="left:951px;top:55px;font-size:7.7px;color:#1a1a1a">代理状态</div>
<div class="a" style="left:674px;top:52px;width:1px;height:13px;background:#dcdcdc"></div><div class="a" style="left:838px;top:52px;width:1px;height:13px;background:#dcdcdc"></div><div class="a" style="left:892px;top:52px;width:1px;height:13px;background:#dcdcdc"></div><div class="a" style="left:947px;top:52px;width:1px;height:13px;background:#dcdcdc"></div><div class="a" style="left:1001px;top:52px;width:1px;height:13px;background:#dcdcdc"></div>
<svg style="left:565px;top:66px" width="453" height="230" viewBox="565 66 453 230" shape-rendering="crispEdges"><path d="M565 78.5H1018M565 91.5H1018M565 104.5H1018M565 117.5H1018M565 130.5H1018M565 143.5H1018M565 156.5H1018M565 169.5H1018M565 182.5H1018M565 196.5H1018M565 209.5H1018M565 222.5H1018M565 235.5H1018M565 248.5H1018M565 261.5H1018M565 274.5H1018M565 287.5H1018M674.5 66V294M838.5 66V294M892.5 66V294M947.5 66V294M1001.5 66V294" stroke="#d6d6d6" stroke-width="1" fill="none"/></svg>
<div class="t" style="left:590px;top:69.0px;font-size:7.7px;color:#ececec">Autodesk Vault</div><div class="t" style="left:842px;top:69.0px;font-size:7.7px;color:#ececec">已注销 (资...</div>
<div class="t" style="left:600px;top:82.1px;font-size:7.7px;color:#ececec">无标题场景</div>
<div class="t" style="left:610px;top:95.2px;font-size:7.7px;color:#ececec">贴图 / 明暗器</div>
<div class="t" style="left:621px;top:108.3px;font-size:7.7px;color:#ececec">xiadele_12_1...</div><div class="t" style="left:678px;top:108.3px;font-size:7.7px;color:#ececec">E:\原创模型套装 电视柜52\原创模型套装 电...</div><div class="t" style="left:842px;top:108.3px;font-size:7.7px;color:#ececec">确定</div>
<div class="t" style="left:621px;top:121.4px;font-size:7.7px;color:#ececec">xiadele_14_4...</div><div class="t" style="left:678px;top:121.4px;font-size:7.7px;color:#ececec">E:\原创模型套装 电视柜52\原创模型套装 电...</div><div class="t" style="left:842px;top:121.4px;font-size:7.7px;color:#ececec">确定</div>
<div class="t" style="left:621px;top:134.5px;font-size:7.7px;color:#ececec">xiadele_14_5...</div><div class="t" style="left:678px;top:134.5px;font-size:7.7px;color:#ececec">E:\原创模型套装 电视柜52\原创模型套装 电...</div><div class="t" style="left:842px;top:134.5px;font-size:7.7px;color:#ececec">确定</div>
<div class="t" style="left:621px;top:147.6px;font-size:7.7px;color:#ececec">xiadele_14_F...</div><div class="t" style="left:678px;top:147.6px;font-size:7.7px;color:#ececec">E:\原创模型套装 电视柜52\原创模型套装 电...</div><div class="t" style="left:842px;top:147.6px;font-size:7.7px;color:#ececec">确定</div>
<div class="t" style="left:621px;top:160.7px;font-size:7.7px;color:#ececec">xiadele_2016...</div><div class="t" style="left:678px;top:160.7px;font-size:7.7px;color:#ececec">C:\Users\BANJIAJIA\Desktop\下得乐原创\...</div><div class="t" style="left:842px;top:160.7px;font-size:7.7px;color:#ececec">文件丢失</div>
<div class="t" style="left:621px;top:173.8px;font-size:7.7px;color:#ececec">xiadele_542f...</div><div class="t" style="left:678px;top:173.8px;font-size:7.7px;color:#ececec">C:\Users\BANJIAJIA\Desktop\下得乐原创\...</div><div class="t" style="left:842px;top:173.8px;font-size:7.7px;color:#ececec">文件丢失</div>
<div class="t" style="left:621px;top:186.9px;font-size:7.7px;color:#ececec">xiadele_a02a...</div><div class="t" style="left:678px;top:186.9px;font-size:7.7px;color:#ececec">E:\原创模型套装 电视柜52\原创模型套装 电...</div><div class="t" style="left:842px;top:186.9px;font-size:7.7px;color:#ececec">确定</div>
<div class="t" style="left:621px;top:200.0px;font-size:7.7px;color:#ececec">xiadele_Conc...</div><div class="t" style="left:678px;top:200.0px;font-size:7.7px;color:#ececec">E:\原创模型套装 电视柜52\原创模型套装 电...</div><div class="t" style="left:842px;top:200.0px;font-size:7.7px;color:#ececec">确定</div>
<div class="t" style="left:621px;top:213.1px;font-size:7.7px;color:#ececec">xiadele_g7.jpg</div><div class="t" style="left:678px;top:213.1px;font-size:7.7px;color:#ececec">E:\原创模型套装 电视柜52\原创模型套装 电...</div><div class="t" style="left:842px;top:213.1px;font-size:7.7px;color:#ececec">确定</div>
<div class="t" style="left:621px;top:226.2px;font-size:7.7px;color:#ececec">xiadele_js00...</div><div class="t" style="left:678px;top:226.2px;font-size:7.7px;color:#ececec">E:\原创模型套装 电视柜52\原创模型套装 电...</div><div class="t" style="left:842px;top:226.2px;font-size:7.7px;color:#ececec">确定</div>
<div class="t" style="left:621px;top:239.3px;font-size:7.7px;color:#ececec">xiadele_js00...</div><div class="t" style="left:678px;top:239.3px;font-size:7.7px;color:#ececec">E:\原创模型套装 电视柜52\原创模型套装 电...</div><div class="t" style="left:842px;top:239.3px;font-size:7.7px;color:#ececec">确定</div>
<div class="t" style="left:621px;top:252.4px;font-size:7.7px;color:#ececec">xiadele_tietu...</div><div class="t" style="left:678px;top:252.4px;font-size:7.7px;color:#ececec">C:\Users\BANJIAJIA\Desktop\下得乐原创\...</div><div class="t" style="left:842px;top:252.4px;font-size:7.7px;color:#ececec">文件丢失</div>
<div class="t" style="left:621px;top:265.5px;font-size:7.7px;color:#ececec">xiadele_TR_1...</div><div class="t" style="left:678px;top:265.5px;font-size:7.7px;color:#ececec">E:\原创模型套装 电视柜52\原创模型套装 电...</div><div class="t" style="left:842px;top:265.5px;font-size:7.7px;color:#ececec">确定</div>
<div class="t" style="left:621px;top:278.6px;font-size:7.7px;color:#ececec">xiadele_xx.jpg</div><div class="t" style="left:678px;top:278.6px;font-size:7.7px;color:#ececec">E:\原创模型套装 电视柜52\原创模型套装 电...</div><div class="t" style="left:842px;top:278.6px;font-size:7.7px;color:#ececec">确定</div>
<svg style="left:565px;top:66px" width="110" height="230" viewBox="565 66 110 230"><defs><linearGradient id="pic" x1="0" y1="0" x2="0" y2="1"><stop offset="0" stop-color="#cfe8f6"/><stop offset="0.45" stop-color="#9cc8de"/><stop offset="0.55" stop-color="#3c7286"/><stop offset="1" stop-color="#1f4654"/></linearGradient><linearGradient id="picx" x1="0" y1="0" x2="0" y2="1"><stop offset="0" stop-color="#8a9a9c"/><stop offset="0.5" stop-color="#6f8284"/><stop offset="1" stop-color="#566668"/></linearGradient></defs><circle cx="584.500" cy="72.3" r="4" fill="#9a9a9a"/><circle cx="583.500" cy="71.3" r="1.800" fill="#d8d8d8"/><rect x="590" y="80.39999999999999" width="8" height="10" rx="1" fill="#dff3f2"/><text x="591.500" y="88.89999999999999" font-size="8.500" font-weight="bold" fill="#19a08e" font-family="Liberation Sans, sans-serif">3</text><path d="M602 101.5l2-6h4l-1.500 6z" fill="#24a838"/><path d="M601 102.0h7" stroke="#126a20" stroke-width="1"/><rect x="609.500" y="107.39999999999999" width="10" height="8.500" fill="url(#pic)" stroke="#eef4f8" stroke-width="1"/><path d="M610 111.1q3-2.500 5 0t4.500-.5" stroke="#f4fafc" stroke-width="1" fill="none"/><rect x="609.500" y="120.5" width="10" height="8.500" fill="url(#pic)" stroke="#eef4f8" stroke-width="1"/><path d="M610 124.2q3-2.500 5 0t4.500-.5" stroke="#f4fafc" stroke-width="1" fill="none"/><rect x="609.500" y="133.60000000000002" width="10" height="8.500" fill="url(#pic)" stroke="#eef4f8" stroke-width="1"/><path d="M610 137.3q3-2.500 5 0t4.500-.5" stroke="#f4fafc" stroke-width="1" fill="none"/><rect x="609.500" y="146.70000000000002" width="10" height="8.500" fill="url(#pic)" stroke="#eef4f8" stroke-width="1"/><path d="M610 150.4q3-2.500 5 0t4.500-.5" stroke="#f4fafc" stroke-width="1" fill="none"/><rect x="609.500" y="159.8" width="10" height="8.500" fill="url(#picx)" stroke="#8d9a9c" stroke-width="1"/><rect x="609.500" y="172.90000000000003" width="10" height="8.500" fill="url(#picx)" stroke="#8d9a9c" stroke-width="1"/><rect x="609.500" y="186.0" width="10" height="8.500" fill="url(#pic)" stroke="#eef4f8" stroke-width="1"/><path d="M610 189.7q3-2.500 5 0t4.500-.5" stroke="#f4fafc" stroke-width="1" fill="none"/><rect x="609.500" y="199.10000000000002" width="10" height="8.500" fill="url(#pic)" stroke="#eef4f8" stroke-width="1"/><path d="M610 202.8q3-2.500 5 0t4.500-.5" stroke="#f4fafc" stroke-width="1" fill="none"/><rect x="609.500" y="212.20000000000002" width="10" height="8.500" fill="url(#pic)" stroke="#eef4f8" stroke-width="1"/><path d="M610 215.9q3-2.500 5 0t4.500-.5" stroke="#f4fafc" stroke-width="1" fill="none"/><rect x="609.500" y="225.3" width="10" height="8.500" fill="url(#pic)" stroke="#eef4f8" stroke-width="1"/><path d="M610 229.0q3-2.500 5 0t4.500-.5" stroke="#f4fafc" stroke-width="1" fill="none"/><rect x="609.500" y="238.4" width="10" height="8.500" fill="url(#pic)" stroke="#eef4f8" stroke-width="1"/><path d="M610 242.1q3-2.500 5 0t4.500-.5" stroke="#f4fafc" stroke-width="1" fill="none"/><rect x="609.500" y="251.50000000000003" width="10" height="8.500" fill="url(#picx)" stroke="#8d9a9c" stroke-width="1"/><rect x="609.500" y="264.6" width="10" height="8.500" fill="url(#pic)" stroke="#eef4f8" stroke-width="1"/><path d="M610 268.3q3-2.500 5 0t4.500-.5" stroke="#f4fafc" stroke-width="1" fill="none"/><rect x="609.500" y="277.70000000000005" width="10" height="8.500" fill="url(#pic)" stroke="#eef4f8" stroke-width="1"/><path d="M610 281.40000000000003q3-2.500 5 0t4.500-.5" stroke="#f4fafc" stroke-width="1" fill="none"/></svg>
<div class="a" style="left:565px;top:297px;width:454px;height:15px;background:#444;border:2px solid #e4e4e0;border-top-color:#c8c8c8;border-left-color:#c8c8c8"></div>
<div class="a" style="left:1067px;top:74px;width:132px;height:509px;background:#444"></div>
<div class="a" style="left:1070px;top:77px;width:129px;height:1.500px;background:#808080"></div>
<div class="a" style="left:1091px;top:80px;width:100px;height:20px;background:#3b3b3b"></div>
<svg style="left:1070px;top:78px" width="129" height="40" viewBox="1070 78 129 40"><path d="M1079 83v13M1072.500 89.500h13" stroke="#f2f2f2" stroke-width="1.600" fill="none"/><rect x="1095" y="84" width="10" height="10" fill="none" stroke="#2f9a8e" stroke-width="1.200" stroke-dasharray="3 1.500"/><path d="M1096 93q1-7 8-8" stroke="#aaa" stroke-width="1.200" fill="none"/><rect x="1116" y="84" width="9" height="4" fill="#9a9a9a"/><path d="M1116.500 88v7M1124.500 88v6M1116.500 91.500h5" stroke="#2f9a8e" stroke-width="1.200" fill="none"/><circle cx="1138" cy="89.500" r="4.500" fill="#2f8f85"/><circle cx="1140.500" cy="89.500" r="4.500" fill="#b4b4b4"/><rect x="1154" y="85" width="11" height="7.500" fill="#b4b4b4"/><path d="M1159.500 92.500v2.500M1157 95.500h5" stroke="#b4b4b4" stroke-width="1.200"/><path d="M1176 84.500l2.500 3 6 6.500" stroke="#b8b8b8" stroke-width="2.200" stroke-linecap="round" fill="none"/><path d="M1174.500 83.500l3 .5" stroke="#b8b8b8" stroke-width="1.500"/><rect x="1072.500" y="101.500" width="13" height="13" rx="2" fill="#5577c2" stroke="#6d8fd8"/><circle cx="1079" cy="108" r="4.500" fill="#e2e2e2"/><circle cx="1091.500" cy="106.500" r="3" fill="#bbb" stroke="#eee" stroke-width="0.800"/><rect x="1092" y="107" width="5.500" height="5" fill="#ddd"/><path d="M1105.500 103q3 0 3 3 0 2-1.500 3v2h-3v-2q-1.500-1-1.500-3 0-3 3-3z" fill="#e6e6e6"/><rect x="1115" y="105" width="7" height="6" rx="1" fill="#e2e2e2"/><path d="M1122 108l3-2.500v5z" fill="#e2e2e2"/><path d="M1130.500 103.500v9h8z" fill="none" stroke="#e6e6e6" stroke-width="1.300"/><path d="M1130 110.500h6" stroke="#e6e6e6" stroke-width="1"/><path d="M1143 105.500q2-2 4 0t4 0M1143 108.500q2-2 4 0t4 0M1143 111.500q2-2 4 0t4 0" stroke="#cfcfcf" stroke-width="1.100" fill="none"/><circle cx="1158.500" cy="106" r="1.800" fill="none" stroke="#e6e6e6" stroke-width="1.100"/><circle cx="1162.500" cy="110.500" r="2" fill="none" stroke="#e6e6e6" stroke-width="1.100"/></svg>
<div class="a" style="left:1072px;top:119px;width:125px;height:12px;background:#5b5b5b"></div><div class="t" style="left:1075px;top:121px;font-size:7.600px;color:#e6e6e6">标准基本体</div><div class="t" style="left:1188px;top:122.500px;font-size:5px;color:#f0f0f0">▼</div>
<div class="a" style="left:1072px;top:134px;width:120px;height:104px;background:#515151"></div><div class="t" style="left:1076px;top:138.500px;font-size:4.500px;color:#ccc">▼</div><div class="t" style="left:1083px;top:136px;font-size:8.200px;font-weight:bold;color:#fff">对象类型</div><div class="a" style="left:1184px;top:139px;width:4px;height:1px;background:#777"></div><div class="a" style="left:1184px;top:141px;width:4px;height:1px;background:#777"></div><div class="a" style="left:1104px;top:150px;width:3px;height:3px;background:#666"></div><div class="t" style="left:1109px;top:148px;font-size:7.600px;color:#858585">自动栅格</div>
<div class="a" style="left:1082px;top:160.0px;width:49px;height:10px;background:#656565;border-radius:1px"></div><div class="t" style="left:1082px;top:161.0px;width:49px;text-align:center;font-size:7.600px;color:#e0e0e0">长方体</div><div class="a" style="left:1134px;top:160.0px;width:49px;height:10px;background:#656565;border-radius:1px"></div><div class="t" style="left:1134px;top:161.0px;width:49px;text-align:center;font-size:7.600px;color:#e0e0e0">圆锥体</div>
<div class="a" style="left:1082px;top:173.1px;width:49px;height:10px;background:#656565;border-radius:1px"></div><div class="t" style="left:1082px;top:174.1px;width:49px;text-align:center;font-size:7.600px;color:#e0e0e0">球体</div><div class="a" style="left:1134px;top:173.1px;width:49px;height:10px;background:#656565;border-radius:1px"></div><div class="t" style="left:1134px;top:174.1px;width:49px;text-align:center;font-size:7.600px;color:#e0e0e0">几何球体</div>
<div class="a" style="left:1082px;top:186.1px;width:49px;height:10px;background:#656565;border-radius:1px"></div><div class="t" style="left:1082px;top:187.1px;width:49px;text-align:center;font-size:7.600px;color:#e0e0e0">圆柱体</div><div class="a" style="left:1134px;top:186.1px;width:49px;height:10px;background:#656565;border-radius:1px"></div><div class="t" style="left:1134px;top:187.1px;width:49px;text-align:center;font-size:7.600px;color:#e0e0e0">管状体</div>
<div class="a" style="left:1082px;top:199.2px;width:49px;height:10px;background:#656565;border-radius:1px"></div><div class="t" style="left:1082px;top:200.2px;width:49px;text-align:center;font-size:7.600px;color:#e0e0e0">圆环</div><div class="a" style="left:1134px;top:199.2px;width:49px;height:10px;background:#656565;border-radius:1px"></div><div class="t" style="left:1134px;top:200.2px;width:49px;text-align:center;font-size:7.600px;color:#e0e0e0">四棱锥</div>
<div class="a" style="left:1082px;top:212.2px;width:49px;height:10px;background:#656565;border-radius:1px"></div><div class="t" style="left:1082px;top:213.2px;width:49px;text-align:center;font-size:7.600px;color:#e0e0e0">茶壶</div><div class="a" style="left:1134px;top:212.2px;width:49px;height:10px;background:#656565;border-radius:1px"></div><div class="t" style="left:1134px;top:213.2px;width:49px;text-align:center;font-size:7.600px;color:#e0e0e0">平面</div>
<div class="a" style="left:1082px;top:225.2px;width:49px;height:10px;background:#656565;border-radius:1px"></div><div class="t" style="left:1082px;top:226.2px;width:49px;text-align:center;font-size:7.600px;color:#e0e0e0">加强型文本</div>
<div class="a" style="left:1072px;top:241px;width:120px;height:35px;background:#515151"></div><div class="t" style="left:1076px;top:246px;font-size:4.500px;color:#ccc">▼</div><div class="t" style="left:1083px;top:243.500px;font-size:8.200px;font-weight:bold;color:#fff">名称和颜色</div><div class="a" style="left:1184px;top:246px;width:4px;height:1px;background:#777"></div><div class="a" style="left:1184px;top:248px;width:4px;height:1px;background:#777"></div><div class="a" style="left:1086px;top:259px;width:81px;height:11px;background:#5c5c5c"></div><div class="a" style="left:1169px;top:257px;width:11px;height:14px;background:#d4258a;border:1px solid #2a2a2a"></div>
<div class="a" style="left:1195px;top:134px;width:2px;height:447px;background:#3b3b3b"></div>
<div class="a" style="left:0;top:582px;width:1199px;height:69px;background:#444"></div>
<div class="a" style="left:27px;top:584px;width:1040px;height:12px;background:#464646"></div><div class="a" style="left:28px;top:585px;width:97px;height:10px;background:#535353;border-radius:2px"></div><div class="a" style="left:37px;top:585px;width:79px;height:10px;background:#696969"></div><div class="t" style="left:30px;top:586px;font-size:8px;color:#aaa;font-family:'Liberation Mono',monospace">&lt;</div><div class="t" style="left:118px;top:586px;font-size:8px;color:#aaa;font-family:'Liberation Mono',monospace">&gt;</div><div class="t mono" style="left:62px;top:586.500px;font-size:6.300px;color:#e8e8e8">0 / 100</div>
<div class="a" style="left:27px;top:596px;width:1172px;height:18px;background:#3d3d3d"></div><div class="a" style="left:58px;top:597px;width:1120px;height:17px;background:#343434"></div><div class="a" style="left:23px;top:584px;width:2px;height:28px;background:#5a5a5a"></div><svg style="left:60px;top:596px" width="1139" height="18" viewBox="60 596 1139 18" shape-rendering="crispEdges"><path d="M63.5 598v8M74.5 598v7M85.5 598v7M96.5 598v7M107.5 598v7M118.5 598v8M129.5 598v7M140.5 598v7M151.5 598v7M162.5 598v7M173.5 598v8M184.5 598v7M195.5 598v7M206.5 598v7M217.5 598v7M228.5 598v8M239.5 598v7M250.5 598v7M261.5 598v7M272.5 598v7M283.5 598v8M294.5 598v7M305.5 598v7M316.5 598v7M327.5 598v7M338.5 598v8M349.5 598v7M360.5 598v7M371.5 598v7M382.5 598v7M393.5 598v8M404.5 598v7M415.5 598v7M426.5 598v7M437.5 598v7M448.5 598v8M459.5 598v7M470.5 598v7M481.5 598v7M492.5 598v7M503.5 598v8M514.5 598v7M525.5 598v7M536.5 598v7M547.5 598v7M558.5 598v8M569.5 598v7M580.5 598v7M591.5 598v7M602.5 598v7M613.5 598v8M624.5 598v7M635.5 598v7M646.5 598v7M657.5 598v7M668.5 598v8M679.5 598v7M690.5 598v7M701.5 598v7M712.5 598v7M723.5 598v8M734.5 598v7M745.5 598v7M756.5 598v7M767.5 598v7M778.5 598v8M789.5 598v7M800.5 598v7M811.5 598v7M822.5 598v7M833.5 598v8M844.5 598v7M855.5 598v7M866.5 598v7M877.5 598v7M888.5 598v8M899.5 598v7M910.5 598v7M921.5 598v7M932.5 598v7M943.5 598v8M954.5 598v7M965.5 598v7M976.5 598v7M987.5 598v7M998.5 598v8M1009.5 598v7M1020.5 598v7M1031.5 598v7M1042.5 598v7M1053.5 598v8M1064.5 598v7M1075.5 598v7M1086.5 598v7M1097.5 598v7M1108.5 598v8M1119.5 598v7M1130.5 598v7M1141.5 598v7M1152.5 598v7M1164.5 598v8" stroke="#606060" stroke-width="1" fill="none"/></svg>
<div class="t mono" style="left:116.0px;top:605.500px;font-size:7px;color:#cfcfcf">5</div><div class="t mono" style="left:168.9px;top:605.500px;font-size:7px;color:#cfcfcf">10</div><div class="t mono" style="left:224.0px;top:605.500px;font-size:7px;color:#cfcfcf">15</div><div class="t mono" style="left:279.0px;top:605.500px;font-size:7px;color:#cfcfcf">20</div><div class="t mono" style="left:334.1px;top:605.500px;font-size:7px;color:#cfcfcf">25</div><div class="t mono" style="left:389.1px;top:605.500px;font-size:7px;color:#cfcfcf">30</div><div class="t mono" style="left:444.1px;top:605.500px;font-size:7px;color:#cfcfcf">35</div><div class="t mono" style="left:499.2px;top:605.500px;font-size:7px;color:#cfcfcf">40</div><div class="t mono" style="left:554.2px;top:605.500px;font-size:7px;color:#cfcfcf">45</div><div class="t mono" style="left:609.3px;top:605.500px;font-size:7px;color:#cfcfcf">50</div><div class="t mono" style="left:664.3px;top:605.500px;font-size:7px;color:#cfcfcf">55</div><div class="t mono" style="left:719.4px;top:605.500px;font-size:7px;color:#cfcfcf">60</div><div class="t mono" style="left:774.4px;top:605.500px;font-size:7px;color:#cfcfcf">65</div><div class="t mono" style="left:829.5px;top:605.500px;font-size:7px;color:#cfcfcf">70</div><div class="t mono" style="left:884.5px;top:605.500px;font-size:7px;color:#cfcfcf">75</div><div class="t mono" style="left:939.6px;top:605.500px;font-size:7px;color:#cfcfcf">80</div><div class="t mono" style="left:994.6px;top:605.500px;font-size:7px;color:#cfcfcf">85</div><div class="t mono" style="left:1049.7px;top:605.500px;font-size:7px;color:#cfcfcf">90</div><div class="t mono" style="left:1104.8px;top:605.500px;font-size:7px;color:#cfcfcf">95</div><div class="t mono" style="left:1157.7px;top:605.500px;font-size:7px;color:#cfcfcf">100</div>
<div class="a" style="left:59.500px;top:598px;width:5.500px;height:15.500px;background:#aca02c;border:1px solid #cfc440"></div><div class="t mono" style="left:60.500px;top:606.500px;font-size:6px;color:#e8e090">0</div><svg style="left:33px;top:599px" width="14" height="12" viewBox="33 599 14 12"><path d="M35 601l1 8M37 601l1 4M40 608l4-6M40 602a1 1 0 1 0 .1 0M44 607a1 1 0 1 0 .1 0" stroke="#3aa79a" stroke-width="1" fill="none"/></svg>
<div class="a" style="left:3px;top:617px;width:61px;height:15px;background:#e6c6c6"></div><div class="a" style="left:3px;top:633px;width:61px;height:13px;background:#fcfcfc"></div><div class="t mono" style="left:5px;top:635.500px;font-size:7px;color:#9a9a9a">MAXScript 迷</div><div class="a" style="left:66px;top:616px;width:1px;height:32px;background:#383838"></div><div class="t" style="left:70px;top:620.500px;font-size:7.600px;color:#ececec">未选定任何对象</div><div class="t" style="left:70px;top:637px;font-size:7.600px;color:#ececec">单击或单击并拖动以选择对象</div>
<svg style="left:620px;top:616px" width="60" height="20" viewBox="620 616 60 20"><path d="M626 621v8M632 621v8M624 625h10" stroke="#2e2e2e" stroke-width="1.500" fill="none"/><rect x="643" y="624" width="5" height="5" fill="none" stroke="#2a2a2a" stroke-width="1.200"/><path d="M644 624v-2h3v2" stroke="#2a2a2a" fill="none"/><rect x="658.500" y="620.500" width="8" height="8" fill="#333" stroke="#e8e8e8" stroke-width="1"/><circle cx="662.500" cy="624.500" r="2" fill="none" stroke="#e8e8e8" stroke-width="1"/><path d="M662.500 620v9M658 624.500h9" stroke="#e8e8e8" stroke-width="0.700"/></svg><div class="t mono" style="left:673px;top:621px;font-size:7px;font-weight:bold;color:#e0e0e0">X:</div><div class="a" style="left:683px;top:619px;width:36px;height:11px;background:#575757"></div><div class="t mono" style="left:685px;top:621px;font-size:6.500px;color:#858585">10300.325</div><div class="t mono" style="left:727px;top:621px;font-size:7px;font-weight:bold;color:#e0e0e0">Y:</div><div class="a" style="left:737px;top:619px;width:36px;height:11px;background:#575757"></div><div class="t mono" style="left:739px;top:621px;font-size:6.500px;color:#858585">-3774.262</div><div class="t mono" style="left:780px;top:621px;font-size:7px;font-weight:bold;color:#e0e0e0">Z:</div><div class="a" style="left:790px;top:619px;width:36px;height:11px;background:#575757"></div><div class="t mono" style="left:792px;top:621px;font-size:6.500px;color:#858585">0.0</div><div class="t mono" style="left:838px;top:621px;font-size:7px;color:#d8d8d8">栅格 = 10.0</div>
<div class="a" style="left:819px;top:633px;width:13px;height:13px;background:#4f86d4;border-radius:2px"></div><div class="a" style="left:822px;top:636px;width:7px;height:7px;border:1px solid #dfe8f6;border-radius:50%"></div><div class="t" style="left:835px;top:636.500px;font-size:7.400px;color:#e4e4e4">添加时间标记</div>
<div class="t" style="left:906px;top:634px;font-size:6px;color:#ddd">◀▶</div><div class="a" style="left:920px;top:632px;width:44px;height:12px;background:#5c5c5c"></div><div class="t mono" style="left:922px;top:634.500px;font-size:7px;color:#e0e0e0">0</div><div class="t" style="left:957px;top:633px;font-size:4px;line-height:4.500px;color:#ddd">▲<br>▼</div><svg style="left:966px;top:632px" width="12" height="12" viewBox="966 632 12 12"><circle cx="970.500" cy="636.500" r="2.300" fill="none" stroke="#d8c060" stroke-width="1.400"/><circle cx="973.500" cy="639.500" r="2.300" fill="none" stroke="#e8e8e8" stroke-width="1.400"/></svg><div class="a" style="left:986px;top:620px;width:27px;height:26px;background:#5f5f5f;border-radius:2px"></div><svg style="left:986px;top:620px" width="27" height="26" viewBox="986 620 27 26"><path d="M997.500 624v15M990 631.500h15" stroke="#f0f0f0" stroke-width="2.400" fill="none"/><path d="M1000 641l6-6 2 2-6 6z" fill="#3aa79a"/></svg><div class="a" style="left:1015px;top:619px;width:39px;height:11px;background:#5c5c5c"></div><div class="t" style="left:1017px;top:621px;font-size:7.400px;color:#e4e4e4">自动关键点</div><div class="a" style="left:1015px;top:632px;width:39px;height:12px;background:#5c5c5c"></div><div class="t" style="left:1017px;top:634.500px;font-size:7.400px;color:#e4e4e4">设置关键点</div><svg style="left:1058px;top:632px" width="14" height="12" viewBox="1058 632 14 12"><path d="M1062 635q3-2 5 1M1061 637v6M1068 637v6" stroke="#e8e8e8" stroke-width="1.200" fill="none"/><circle cx="1061" cy="634.500" r="1" fill="#3aa79a"/></svg><div class="a" style="left:1073px;top:632px;width:55px;height:12px;background:#5c5c5c"></div><div class="t" style="left:1075px;top:634.500px;font-size:7.400px;color:#e4e4e4">关键点过滤器...</div><div class="a" style="left:1073px;top:619px;width:55px;height:11px;background:#5c5c5c"></div><div class="t" style="left:1075px;top:621px;font-size:7.400px;color:#e4e4e4">选定对象</div><svg style="left:1136px;top:618px" width="63" height="30" viewBox="1136 618 63 30"><path d="M1140 635l5 3-5 3" stroke="#e8e8e8" stroke-width="1.200" fill="none"/><rect x="1154" y="634" width="6" height="3" fill="#e0e0e0"/><rect x="1154" y="639" width="6" height="4" fill="#3aa79a"/><rect x="1161" y="641" width="2" height="2" fill="#ddd"/><circle cx="1172" cy="637.500" r="3.500" fill="#d8d8d8"/><path d="M1169 642l2-2M1175 642l-2-2" stroke="#d8b040" stroke-width="1.500"/><rect x="1176" y="641" width="2" height="2" fill="#ddd"/><rect x="1183" y="633.500" width="9" height="9" fill="#2e2e2e" stroke="#e8e8e8" stroke-width="1"/><rect x="1187" y="634" width="5" height="4.500" fill="#e8e8e8"/><path d="M1185 626l3-3 2 4M1188 621v6" stroke="#3aa79a" stroke-width="1.200" fill="none"/></svg>
<div class="a" style="left:0;top:648.500px;width:1199px;height:3px;background:linear-gradient(#7d8894,#b8c6d4)"></div><div class="a" style="left:0px;top:649px;width:1px;height:2px;background:#4a5058"></div><div class="a" style="left:27px;top:649px;width:1px;height:2px;background:#4a5058"></div><div class="a" style="left:103px;top:649px;width:1px;height:2px;background:#4a5058"></div><div class="a" style="left:178px;top:649px;width:1px;height:2px;background:#4a5058"></div><div class="a" style="left:252px;top:649px;width:1px;height:2px;background:#4a5058"></div><div class="a" style="left:327px;top:649px;width:1px;height:2px;background:#4a5058"></div><div class="a" style="left:402px;top:649px;width:1px;height:2px;background:#4a5058"></div><div class="a" style="left:477px;top:649px;width:1px;height:2px;background:#4a5058"></div><div class="a" style="left:552px;top:649px;width:1px;height:2px;background:#4a5058"></div><div class="a" style="left:627px;top:649px;width:1px;height:2px;background:#4a5058"></div><div class="a" style="left:702px;top:649px;width:1px;height:2px;background:#4a5058"></div><div class="a" style="left:777px;top:649px;width:1px;height:2px;background:#4a5058"></div><div class="a" style="left:852px;top:649px;width:1px;height:2px;background:#4a5058"></div><div class="a" style="left:927px;top:649px;width:1px;height:2px;background:#4a5058"></div><div class="a" style="left:1002px;top:649px;width:1px;height:2px;background:#4a5058"></div><div class="a" style="left:1077px;top:649px;width:1px;height:2px;background:#4a5058"></div><div class="a" style="left:1152px;top:649px;width:1px;height:2px;background:#4a5058"></div>
<div class="t" id="wm1" style="left:806px;top:594px;font-size:31px;line-height:40px;font-weight:900;letter-spacing:-1.700px;color:#fff;text-shadow:2px 2px 1px #000,1px 1px 0 #000,0 0 2px rgba(0,0,0,.6)">头条</div><div class="t" id="wm2" style="left:872px;top:592px;font-size:32px;line-height:40px;color:#fff;transform-origin:0 0;transform:scaleX(1.1);-webkit-text-stroke:0.500px #fff;text-shadow:2px 2px 1px #000,1px 1px 0 #000,0 0 2px rgba(0,0,0,.6)">@3DMAX</div><div class="t" id="wm3" style="left:1027px;top:595.500px;font-size:32px;line-height:40px;letter-spacing:-1.800px;color:#fff;-webkit-text-stroke:0.400px #fff;text-shadow:2px 2px 1px #000,1px 1px 0 #000,0 0 2px rgba(0,0,0,.6)">效果图表现</div>
</div>
</body>
</html>
